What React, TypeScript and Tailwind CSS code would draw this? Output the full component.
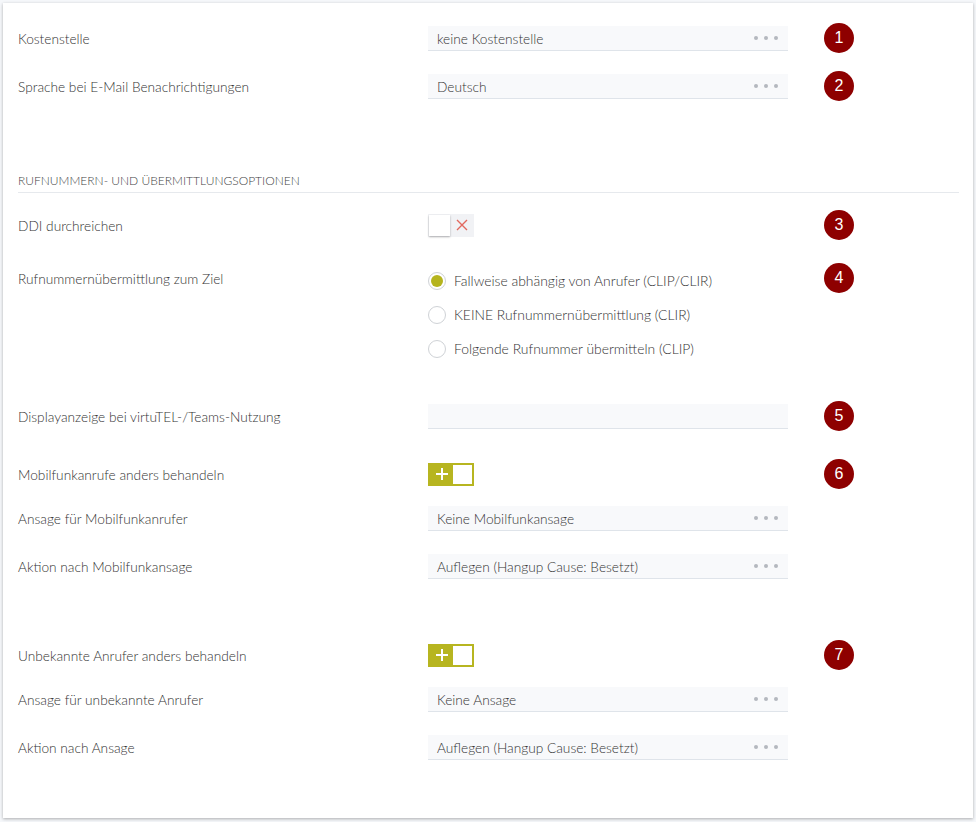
import React from "react";

const font = { fontFamily: "Lato, 'Open Sans', sans-serif" };

function Badge({ n }: { n: number }) {
  return (
    <div
      className="ml-[36px] flex h-[30px] w-[30px] shrink-0 items-center justify-center rounded-full bg-[#8e0000] text-[16px] text-white"
      style={{ fontFamily: "'Liberation Sans', Arial, sans-serif" }}
    >
      {n}
    </div>
  );
}

function Spacer() {
  return <div className="ml-[36px] h-[30px] w-[30px] shrink-0" />;
}

function Label({ children }: { children: React.ReactNode }) {
  return <div className="w-[410px] shrink-0 pt-[2px] text-[13.7px] font-light text-[#333]">{children}</div>;
}

function Select({ value, dots = true }: { value: string; dots?: boolean }) {
  return (
    <div className="flex h-[25px] w-[360px] shrink-0 items-center justify-between border-b border-[#dfe4ea] bg-[#f8f9fb] pl-[9px] pr-[10px] text-[13.7px] font-light text-[#333]">
      <span className="pt-[3px]">{value}</span>
      {dots && (
        <span className="flex gap-[6px]">
          <span className="h-[4px] w-[4px] rounded-full bg-[#b4b8be]" />
          <span className="h-[4px] w-[4px] rounded-full bg-[#b4b8be]" />
          <span className="h-[4px] w-[4px] rounded-full bg-[#b4b8be]" />
        </span>
      )}
    </div>
  );
}

function Row({ label, children, badge, h = "h-[48px]" }: { label: string; children: React.ReactNode; badge?: number; h?: string }) {
  return (
    <div className={`flex ${h} items-center`}>
      <Label>{label}</Label>
      <div className="w-[360px] shrink-0">{children}</div>
      {badge ? <Badge n={badge} /> : <Spacer />}
    </div>
  );
}

function ToggleOff() {
  return (
    <div className="flex h-[23px] w-[46px] items-center bg-[#f1f2f5] p-[1px]">
      <div className="h-[21px] w-[21px] bg-white shadow-[0_1px_2px_rgba(0,0,0,0.3)]" />
      <div className="flex flex-1 items-center justify-center">
        <svg width="12" height="12" viewBox="0 0 12 12">
          <path d="M1 1L11 11M11 1L1 11" stroke="#e2685e" strokeWidth="1.4" />
        </svg>
      </div>
    </div>
  );
}

function ToggleOn() {
  return (
    <div className="flex h-[23px] w-[46px] items-center bg-[#b7b520] p-[2px]">
      <div className="flex flex-1 items-center justify-center">
        <svg width="14" height="14" viewBox="0 0 14 14">
          <path d="M7 1V13M1 7H13" stroke="#fff" strokeWidth="2" />
        </svg>
      </div>
      <div className="h-[19px] w-[19px] bg-white" />
    </div>
  );
}

function Radio({ checked, label }: { checked?: boolean; label: string }) {
  return (
    <div className="flex h-[34px] items-center">
      <div className="flex h-[18px] w-[18px] items-center justify-center rounded-full border border-[#cfd2d6] bg-white">
        {checked && <div className="h-[12px] w-[12px] rounded-full bg-[#b5b41e]" />}
      </div>
      <span className="ml-[8px] text-[13.9px] font-light text-[#333]">{label}</span>
    </div>
  );
}

export default function App() {
  return (
    <div className="min-h-[822px] bg-[#f5f7fa] p-[3px]" style={font}>
      <div className="min-h-[815px] bg-white pl-[15px] pr-[14px] pt-[11px] pb-[47px] shadow-[0_1px_3px_rgba(0,0,0,0.3)]">
        <Row label="Kostenstelle" badge={1}>
          <Select value="keine Kostenstelle" />
        </Row>
        <Row label="Sprache bei E-Mail Benachrichtigungen" badge={2}>
          <Select value="Deutsch" />
        </Row>

        <div className="mt-[64px] border-b border-[#e6e9ed] pb-[4px] text-[12px] font-light uppercase leading-[14px] text-[#444]">
          Rufnummern- und Übermittlungsoptionen
        </div>

        <div className="mt-[8px]">
          <Row label="DDI durchreichen" badge={3}>
            <ToggleOff />
          </Row>
        </div>

        <div className="flex pt-[15px]">
          <div className="mt-[5px] w-[410px] shrink-0 text-[13.7px] font-light leading-[20px] text-[#333]">
            Rufnummernübermittlung zum Ziel
          </div>
          <div className="w-[360px] shrink-0">
            <Radio checked label="Fallweise abhängig von Anrufer (CLIP/CLIR)" />
            <Radio label="KEINE Rufnummernübermittlung (CLIR)" />
            <Radio label="Folgende Rufnummer übermitteln (CLIP)" />
          </div>
          <div className="-mt-[1px]">
            <Badge n={4} />
          </div>
        </div>

        <div className="mt-[26px]">
          <Row label="Displayanzeige bei virtuTEL-/Teams-Nutzung" badge={5}>
            <Select value="" dots={false} />
          </Row>
        </div>

        <div className="mt-[14px]">
          <Row label="Mobilfunkanrufe anders behandeln" badge={6} h="h-[40px]">
            <ToggleOn />
          </Row>
        </div>
        <Row label="Ansage für Mobilfunkanrufer">
          <Select value="Keine Mobilfunkansage" />
        </Row>
        <Row label="Aktion nach Mobilfunkansage">
          <Select value="Auflegen (Hangup Cause: Besetzt)" />
        </Row>

        <div className="mt-[45px]">
          <Row label="Unbekannte Anrufer anders behandeln" badge={7} h="h-[40px]">
            <ToggleOn />
          </Row>
        </div>
        <Row label="Ansage für unbekannte Anrufer">
          <Select value="Keine Ansage" />
        </Row>
        <Row label="Aktion nach Ansage">
          <Select value="Auflegen (Hangup Cause: Besetzt)" />
        </Row>
      </div>
    </div>
  );
}
